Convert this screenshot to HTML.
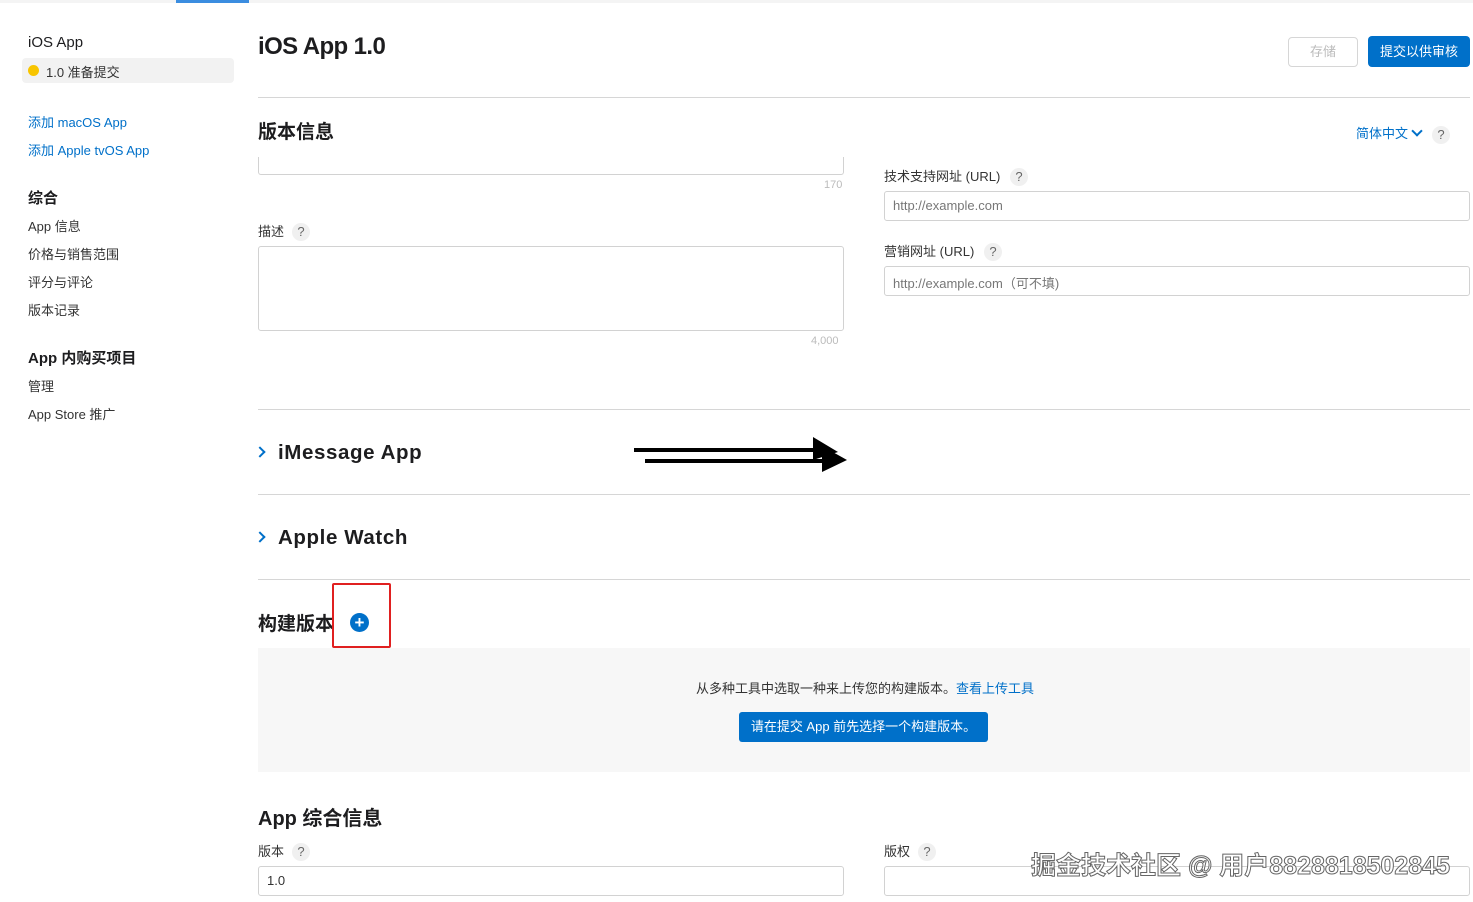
<!DOCTYPE html>
<html><head><meta charset="utf-8"><style>
*{margin:0;padding:0;box-sizing:border-box}
body{width:1473px;height:902px;background:#fff;font-family:"Liberation Sans","Noto Sans CJK SC",sans-serif;color:#1d1d1f;position:relative;overflow:hidden}
.a{position:absolute;white-space:nowrap}
.s{font-size:13px;color:#333}
.l{font-size:13px;color:#0070c9}
.h{font-weight:bold;font-size:19px;color:#1d1d1f}
.hr{position:absolute;left:258px;right:3px;height:1px;background:#d6d6d6}
.inp{position:absolute;border:1px solid #d2d2d2;border-radius:3px;background:#fff;font-size:13px;color:#777;padding:6px 8px}
.q{position:absolute;width:18px;height:18px;border-radius:9px;background:#f0f0f0;color:#666;font-size:13px;text-align:center;line-height:18px}
.chev{position:absolute;width:8px;height:8px;border-top:2px solid #0070c9;border-right:2px solid #0070c9;transform:rotate(45deg)}
</style></head><body>
<div class="a" style="left:0;top:0;width:1473px;height:3px;background:#f4f4f4"></div>
<div class="a" style="left:176px;top:0;width:73px;height:3px;background:#3b8de0"></div>

<div class="a" style="left:28px;top:34px;font-size:15px">iOS App</div>
<div class="a" style="left:22px;top:58px;width:212px;height:25px;background:#f2f2f2;border-radius:4px"></div>
<div class="a" style="left:28px;top:65px;width:11px;height:11px;border-radius:6px;background:#f8c500"></div>
<div class="a s" style="left:46px;top:62px">1.0 准备提交</div>
<div class="a l" style="left:28px;top:112px">添加 macOS App</div>
<div class="a l" style="left:28px;top:140px">添加 Apple tvOS App</div>
<div class="a" style="left:28px;top:187px;font-size:15px;font-weight:bold">综合</div>
<div class="a s" style="left:28px;top:216px">App 信息</div>
<div class="a s" style="left:28px;top:244px">价格与销售范围</div>
<div class="a s" style="left:28px;top:272px">评分与评论</div>
<div class="a s" style="left:28px;top:300px">版本记录</div>
<div class="a" style="left:28px;top:347px;font-size:15px;font-weight:bold">App 内购买项目</div>
<div class="a s" style="left:28px;top:376px">管理</div>
<div class="a s" style="left:28px;top:404px">App Store 推广</div>

<div class="a" style="left:258px;top:33px;font-size:24px;font-weight:bold;letter-spacing:-0.6px">iOS App 1.0</div>
<div class="a" style="left:1288px;top:37px;width:70px;height:30px;border:1px solid #d6d6d6;border-radius:4px;color:#bbb;font-size:13px;text-align:center;line-height:28px">存储</div>
<div class="a" style="left:1368px;top:36px;width:102px;height:31px;background:#0070c9;border-radius:4px;color:#fff;font-size:13px;text-align:center;line-height:31px">提交以供审核</div>
<div class="hr" style="top:97px"></div>

<div class="a h" style="top:117px;left:258px">版本信息</div>
<div class="a l" style="left:1356px;top:123px">简体中文</div>
<div class="chev" style="left:1413px;top:127px;transform:rotate(135deg)"></div>
<div class="q" style="left:1432px;top:126px">?</div>

<div class="a" style="left:258px;top:157px;width:586px;height:18px;border:1px solid #d2d2d2;border-top:none;border-radius:0 0 3px 3px"></div>
<div class="a" style="left:824px;top:179px;font-size:11px;color:#bbb">170</div>
<div class="a s" style="left:258px;top:221px">描述</div>
<div class="q" style="left:292px;top:223px">?</div>
<div class="inp" style="left:258px;top:246px;width:586px;height:85px"></div>
<div class="a" style="left:811px;top:335px;font-size:11px;color:#bbb">4,000</div>

<div class="a s" style="left:884px;top:166px">技术支持网址 (URL)</div>
<div class="q" style="left:1010px;top:168px">?</div>
<div class="inp" style="left:884px;top:191px;width:586px;height:30px">http://example.com</div>
<div class="a s" style="left:884px;top:241px">营销网址 (URL)</div>
<div class="q" style="left:984px;top:243px">?</div>
<div class="inp" style="left:884px;top:266px;width:586px;height:30px">http://example.com（可不填)</div>

<div class="hr" style="top:409px"></div>
<div class="chev" style="left:256px;top:448px"></div>
<div class="a" style="left:278px;top:441px;font-size:20.5px;font-weight:bold;letter-spacing:.6px">iMessage App</div>
<svg class="a" style="left:630px;top:432px" width="225" height="45">
<path d="M4 18H190M15 29H196" stroke="#000" stroke-width="4"/>
<path d="M183 5L208 20L183 28Z M192 14L217 28L192 40Z" fill="#000"/>
</svg>
<div class="hr" style="top:494px"></div>
<div class="chev" style="left:256px;top:533px"></div>
<div class="a" style="left:278px;top:526px;font-size:20.5px;font-weight:bold;letter-spacing:.6px">Apple Watch</div>
<div class="hr" style="top:579px"></div>

<div class="a h" style="top:609px;left:258px">构建版本</div>
<div class="a" style="left:350px;top:613px;width:19px;height:19px;border-radius:10px;background:#0070c9;color:#fff;font-weight:bold;font-size:17px;text-align:center;line-height:19px">+</div>
<div class="a" style="left:332px;top:583px;width:59px;height:65px;border:2px solid #e02020;border-radius:2px"></div>
<div class="a" style="left:258px;top:648px;width:1212px;height:124px;background:#f7f7f7"></div>
<div class="a s" style="left:696px;top:678px">从多种工具中选取一种来上传您的构建版本。<span style="color:#0070c9">查看上传工具</span></div>
<div class="a" style="left:739px;top:712px;width:249px;height:30px;background:#0070c9;border-radius:3px;color:#fff;font-size:13px;text-align:center;line-height:30px">请在提交 App 前先选择一个构建版本。</div>

<div class="a h" style="top:802px;left:258px;font-size:20px">App 综合信息</div>
<div class="a s" style="left:258px;top:841px">版本</div>
<div class="q" style="left:292px;top:843px">?</div>
<div class="inp" style="left:258px;top:866px;width:586px;height:30px;color:#333">1.0</div>
<div class="a s" style="left:884px;top:841px">版权</div>
<div class="q" style="left:918px;top:843px">?</div>
<div class="inp" style="left:884px;top:866px;width:586px;height:30px"></div>
<div class="a" style="left:1031px;top:846px;font-size:25px;color:#fff;-webkit-text-stroke:1px #666;font-weight:bold">掘金技术社区 @ 用户8828818502845</div>
</body></html>
